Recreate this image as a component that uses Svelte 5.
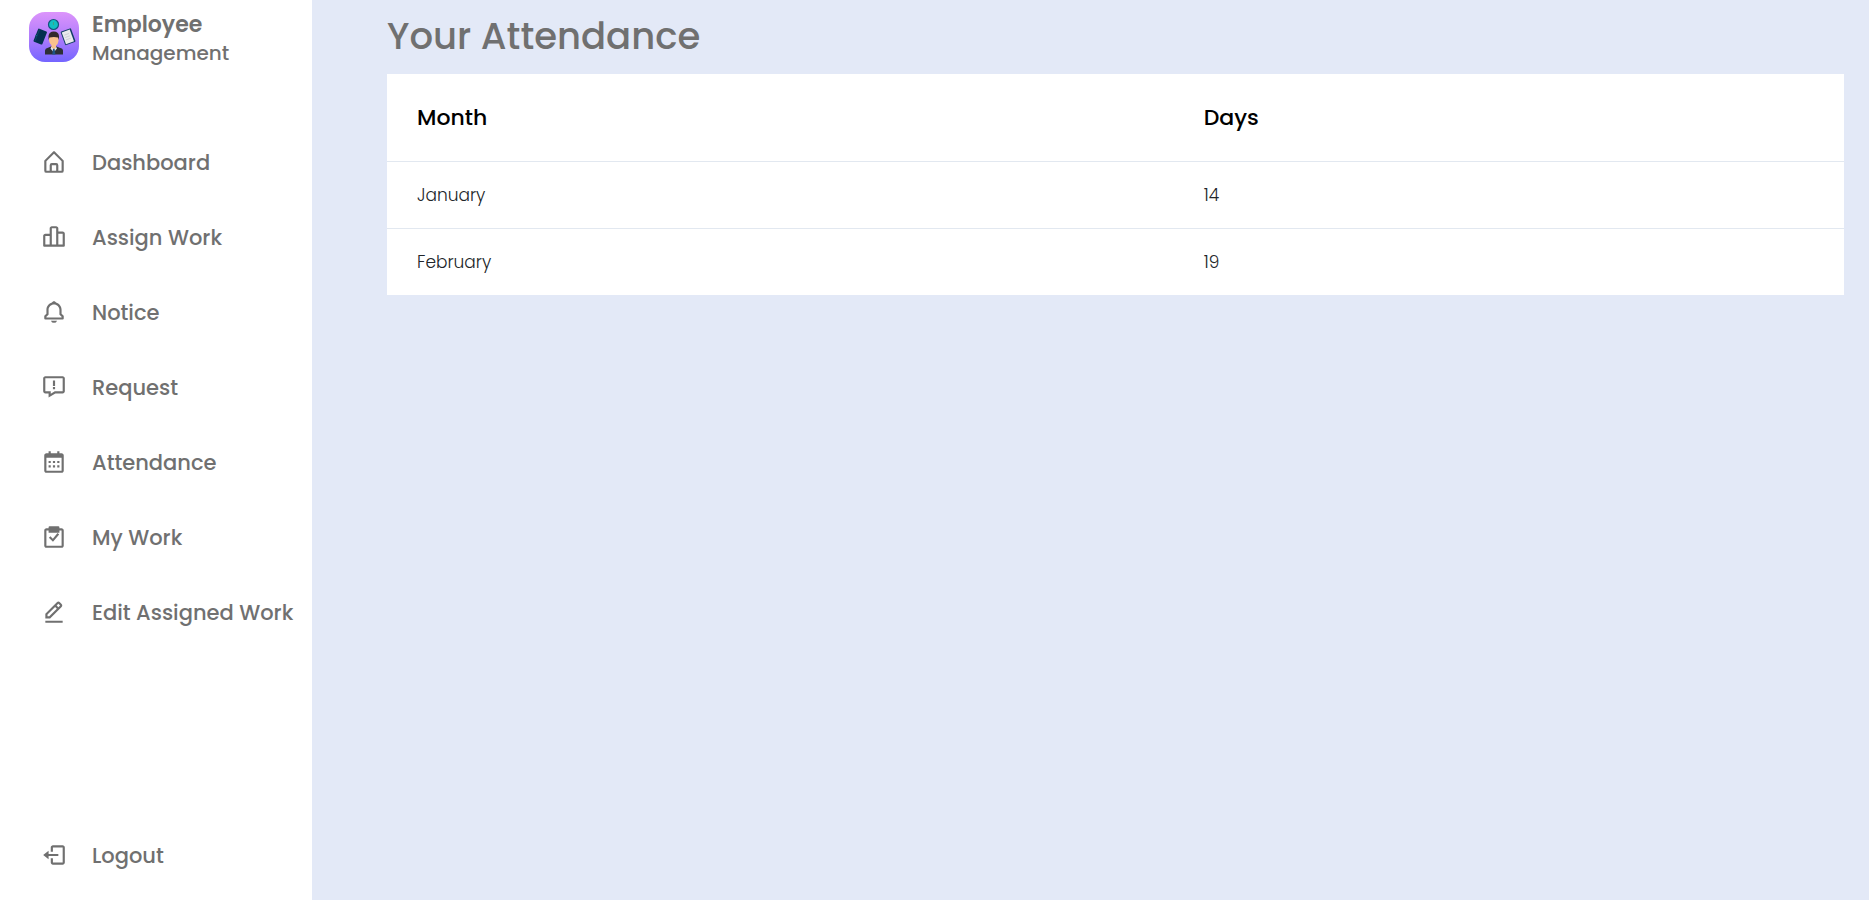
<script>
  const links = [
    { label: 'Dashboard', icon: 'M5 22h14a2 2 0 0 0 2-2v-9a1 1 0 0 0-.29-.71l-8-8a1 1 0 0 0-1.41 0l-8 8A1 1 0 0 0 3 11v9a2 2 0 0 0 2 2zm5-2v-5h4v5zm-5-8.59 7-7 7 7V20h-3v-5a2 2 0 0 0-2-2h-4a2 2 0 0 0-2 2v5H5z' },
    { label: 'Assign Work', icon: 'M20 7h-4V4c0-1.103-.897-2-2-2h-4c-1.103 0-2 .897-2 2v5H4c-1.103 0-2 .897-2 2v9a1 1 0 0 0 1 1h18a1 1 0 0 0 1-1V9c0-1.103-.897-2-2-2zM4 11h4v8H4v-8zm6-1V4h4v15h-4v-9zm10 9h-4V9h4v10z' },
    { label: 'Notice', icon: 'M19 13.586V10c0-3.217-2.185-5.927-5.145-6.742C13.562 2.52 12.846 2 12 2s-1.562.52-1.855 1.258C7.185 4.074 5 6.783 5 10v3.586l-1.707 1.707A.996.996 0 0 0 3 16v2a1 1 0 0 0 1 1h16a1 1 0 0 0 1-1v-2a.996.996 0 0 0-.293-.707L19 13.586zM19 17H5v-.586l1.707-1.707A.996.996 0 0 0 7 14v-4c0-2.757 2.243-5 5-5s5 2.243 5 5v4c0 .266.105.52.293.707L19 16.414V17zm-7 5a2.98 2.98 0 0 0 2.818-2H9.182A2.98 2.98 0 0 0 12 22z' },
    { label: 'Request', icon: 'M20 2H4c-1.103 0-2 .897-2 2v12c0 1.103.897 2 2 2h3v3.767L13.277 18H20c1.103 0 2-.897 2-2V4c0-1.103-.897-2-2-2zm0 14h-7.277L9 18.233V16H4V4h16v12zM11 6h2v5h-2zM11 12h2v2h-2z' },
    { label: 'Attendance', icon: 'M7 11h2v2H7zm0 4h2v2H7zm4-4h2v2h-2zm0 4h2v2h-2zm4-4h2v2h-2zm0 4h2v2h-2zM5 22h14c1.103 0 2-.897 2-2V6c0-1.103-.897-2-2-2h-2V2h-2v2H9V2H7v2H5c-1.103 0-2 .897-2 2v14c0 1.103.897 2 2 2zM19 8v12H5V8z' },
    { label: 'My Work', icon: 'm10.933 13.519-2.226-2.226-1.414 1.414 3.774 3.774 5.702-6.84-1.538-1.282zM19 4h-2V3a1 1 0 0 0-1-1H8a1 1 0 0 0-1 1v1H5c-1.103 0-2 .897-2 2v14c0 1.103.897 2 2 2h14c1.103 0 2-.897 2-2V6c0-1.103-.897-2-2-2zm0 16H5V6h2v2h10V6h2v14z' },
    { label: 'Edit Assigned Work', icon: 'M19.045 7.401c.378-.378.586-.88.586-1.414s-.208-1.036-.586-1.414l-1.586-1.586c-.378-.378-.88-.586-1.414-.586s-1.036.208-1.413.585L4 13.585V18h4.413L19.045 7.401zm-3-3 1.587 1.585-1.59 1.584-1.586-1.585 1.589-1.584zM6 16v-1.585l7.04-7.018 1.586 1.586L7.587 16H6zm-2 4h16v2H4z' }
  ];
  const logout = 'm2 12 5 4v-3h9v-2H7V8zM20 3h-9c-1.103 0-2 .897-2 2v4h2V5h9v14h-9v-4H9v4c0 1.103.897 2 2 2h9c1.103 0 2-.897 2-2V5c0-1.103-.897-2-2-2z';
  const rows = [
    { month: 'January', days: 14 },
    { month: 'February', days: 19 }
  ];
</script>

{#snippet item(label, icon)}
  <a class="link" href="#top">
    <svg viewBox="0 0 24 24" aria-hidden="true"><path d={icon} fill-rule="evenodd" /></svg>
    <span>{label}</span>
  </a>
{/snippet}

<div class="page">
  <aside>
    <header>
      <svg class="logo" viewBox="0 0 50 50" aria-hidden="true">
        <defs>
          <linearGradient id="sky" x1="0" y1="0" x2="0" y2="1">
            <stop offset="0" stop-color="#dc94fb" />
            <stop offset=".5" stop-color="#b07cfc" />
            <stop offset="1" stop-color="#7465ff" />
          </linearGradient>
        </defs>
        <rect width="50" height="50" rx="16" fill="url(#sky)" />
        <circle cx="24.500" cy="12.500" r="5" fill="#12bfc0" stroke="#14527c" stroke-width="1.200" />
        <path d="M24.500 10v3" stroke="#4c9b78" stroke-width=".8" />
        <g transform="rotate(22 11 24.500)">
          <rect x="6.500" y="17.500" width="9.500" height="14" rx="1" fill="#04304f" />
          <path d="M8 18v13" stroke="#0b4a6b" stroke-width=".8" />
          <path d="M6 25h2" stroke="#17698b" />
        </g>
        <g transform="rotate(-20 39 24.500)">
          <rect x="33.500" y="17.500" width="11" height="14.500" rx="1" fill="#123e66" />
          <rect x="34.500" y="18.500" width="8.500" height="12.500" fill="#e9e9ec" />
          <path d="M36 22h5M36 24.500h5M36 27h5" stroke="#c9ccd2" stroke-width=".8" />
        </g>
        <path d="M16 42.500v-4q0-2 3-2.800l3.500-1.500h4.500l3.500 1.500q3.500.8 3.500 2.800v4z" fill="#2d3036" />
        <path d="M22.500 34.500l2.300 2.500 2.200-2.500 1 2-2.500 3-.700-1.500-.800 1.500-2.500-3z" fill="#e5e5eb" />
        <path d="M24 37h1.600l.8 5.500h-3.200z" fill="#1d5486" />
        <path d="M20 25q0-4 4.700-4t4.800 4v3.500q-.5 4-2.500 4.800v2l-2.200 1.700-2.300-1.700v-2Q20.500 32 20 28.500z" fill="#fac28e" />
        <path d="M19.500 28v-4q.5-4.500 5.300-4.500t5.200 4.500v4l-1-2.500q-4-1-8.500 0z" fill="#332a2b" />
      </svg>
      <div class="brand"><strong>Employee</strong><span>Management</span></div>
    </header>
    <nav aria-label="Main">
      {#each links as l}
        {@render item(l.label, l.icon)}
      {/each}
    </nav>
    <div class="bottom">{@render item('Logout', logout)}</div>
  </aside>

  <main>
    <h1>Your Attendance</h1>
    <table>
      <thead><tr><th scope="col">Month</th><th scope="col">Days</th></tr></thead>
      <tbody>
        {#each rows as r}
          <tr><td>{r.month}</td><td>{r.days}</td></tr>
        {/each}
      </tbody>
    </table>
  </main>
</div>

<style>
  :global(body) { margin: 0; }
  .page {
    display: flex;
    min-height: 100vh;
    background: #e3e9f7;
    font-family: Poppins, Inter, sans-serif;
    color: #707070;
  }
  aside {
    box-sizing: border-box;
    flex: 0 0 312px;
    display: flex;
    flex-direction: column;
    padding: 10px 0 20px 29px;
    background: #fff;
  }
  header { display: flex; align-items: flex-start; gap: 13px; height: 60px; }
  .logo { width: 50px; height: 50px; margin-top: 2px; }
  .brand { display: flex; flex-direction: column; font-size: 20px; line-height: 29px; font-weight: 500; }
  strong { font-size: 22px; font-weight: 600; }
  nav { display: flex; flex-direction: column; gap: 25px; padding-top: 67px; }
  .link {
    display: flex;
    align-items: center;
    height: 50px;
    font-size: 21px;
    font-weight: 500;
    color: inherit;
    text-decoration: none;
    white-space: nowrap;
  }
  .link svg { width: 26px; height: 26px; margin: 0 25px 0 12px; fill: #707070; }
  .bottom { margin-top: auto; }
  main { flex: 1; min-width: 0; padding: 6px 25px 0 75px; }
  h1 { margin: 0 0 8px; font-size: 37px; line-height: 60px; font-weight: 500; }
  table { width: 100%; border-collapse: collapse; table-layout: fixed; background: #fff; }
  th, td { padding: 0 30px; text-align: left; }
  th { height: 87px; font-size: 22px; font-weight: 500; color: #000; }
  th:first-child { width: 54%; box-sizing: border-box; }
  td { height: 66px; border-top: 1px solid #e2e8f0; font-size: 17px; font-weight: 300; color: #212529; }
</style>
